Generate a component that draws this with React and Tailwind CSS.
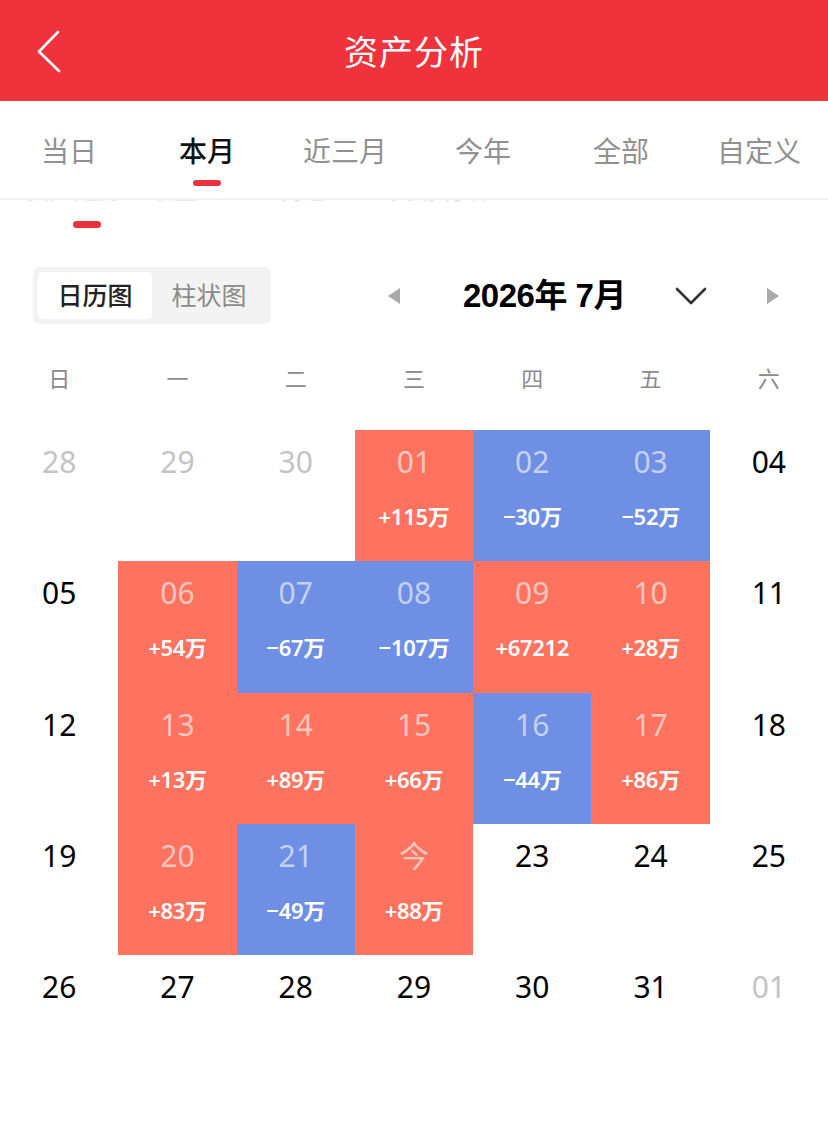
import React, { useState } from 'react';

const RED = 'bg-[#fe735f]';
const BLUE = 'bg-[#6e8fe3]';

const tabs = ['当日', '本月', '近三月', '今年', '全部', '自定义'];
const weekdays = ['日', '一', '二', '三', '四', '五', '六'];

// d: label, m: muted (other month), t: tone (up/down), v: change
const days = [
  { d: '28', m: true }, { d: '29', m: true }, { d: '30', m: true },
  { d: '01', t: 'up', v: '+115万' }, { d: '02', t: 'down', v: '−30万' }, { d: '03', t: 'down', v: '−52万' }, { d: '04' },
  { d: '05' }, { d: '06', t: 'up', v: '+54万' }, { d: '07', t: 'down', v: '−67万' }, { d: '08', t: 'down', v: '−107万' },
  { d: '09', t: 'up', v: '+67212' }, { d: '10', t: 'up', v: '+28万' }, { d: '11' },
  { d: '12' }, { d: '13', t: 'up', v: '+13万' }, { d: '14', t: 'up', v: '+89万' }, { d: '15', t: 'up', v: '+66万' },
  { d: '16', t: 'down', v: '−44万' }, { d: '17', t: 'up', v: '+86万' }, { d: '18' },
  { d: '19' }, { d: '20', t: 'up', v: '+83万' }, { d: '21', t: 'down', v: '−49万' }, { d: '今', t: 'up', v: '+88万' },
  { d: '23' }, { d: '24' }, { d: '25' },
  { d: '26' }, { d: '27' }, { d: '28' }, { d: '29' }, { d: '30' }, { d: '31' }, { d: '01', m: true },
];

const DayCell = ({ day }) => {
  const tone = day.t === 'up' ? RED : day.t === 'down' ? BLUE : '';
  const numColor = day.t ? 'text-white/60' : day.m ? 'text-[#c4c4c4]' : 'text-black';
  return (
    <div className={`h-[131.25px] flex flex-col items-center ${tone}`}>
      <span className={`mt-[13px] text-[30px] leading-[38px] ${numColor}`}>{day.d}</span>
      {day.v && (
        <span className="mt-[21px] text-[22px] leading-[28px] font-semibold text-white tracking-[-0.3px]">{day.v}</span>
      )}
    </div>
  );
};

const App = () => {
  const [tab, setTab] = useState(1);
  const [view, setView] = useState(0);

  return (
    <div className="w-[828px] min-h-[1124px] bg-white font-['Noto_Sans','Noto_Sans_CJK_SC',sans-serif]">
      {/* top bar */}
      <div className="h-[101px] bg-[#ef323b] flex items-center justify-center relative">
        <svg className="absolute left-[34px] top-[27px]" width="30" height="50" viewBox="0 0 30 50" fill="none">
          <path d="M24 5 L5 24.5 L25 44" stroke="white" strokeWidth="2.6" strokeLinecap="round" strokeLinejoin="round" />
        </svg>
        <h1 className="text-white text-[34px] tracking-[1px] font-['Noto_Sans_CJK_SC',sans-serif]">资产分析</h1>
      </div>

      {/* period tabs */}
      <div className="h-[99px] grid grid-cols-6 border-b-2 border-[#f1f1f1]">
        {tabs.map((t, i) => (
          <button key={t} onClick={() => setTab(i)} className="flex flex-col items-center pt-[30px]">
            <span className={`text-[28px] leading-[40px] ${i === tab ? 'text-[#111] font-medium' : 'text-[#919191]'}`}>{t}</span>
            <span className={`mt-[9px] w-[28px] h-[6px] rounded-full ${i === tab ? 'bg-[#e8323c]' : 'bg-transparent'}`} />
          </button>
        ))}
      </div>

      <div className="h-[36px] relative">
        <div className="h-[6px] overflow-hidden text-[24px] leading-[30px] text-[#d0d0d0] opacity-50">
          <div className="-mt-[25px] flex whitespace-nowrap">
            <span className="ml-[26px] w-[124px]">资产走势</span>
            <span className="w-[130px]">收益</span>
            <span className="w-[110px]">持仓</span>
            <span>交易明细</span>
          </div>
        </div>
        <div className="absolute left-[73px] top-[21px] w-[28px] h-[7px] rounded-full bg-[#e8323c]" />
      </div>

      {/* view switch + month selector */}
      <div className="mt-[31px] h-[57px] flex items-center">
        <div className="ml-[33px] w-[238px] h-[57px] bg-[#f3f3f3] rounded-[7px] p-[5px] flex">
          {['日历图', '柱状图'].map((v, i) => (
            <button
              key={v}
              onClick={() => setView(i)}
              className={`w-[114px] h-full rounded-[5px] text-[25px] leading-none ${i === view ? 'bg-white text-[#222] font-medium' : 'text-[#8a8a8a]'}`}
            >
              {v}
            </button>
          ))}
        </div>
        <div className="flex-1 flex items-center">
          <svg className="ml-[116px]" width="14" height="18" viewBox="0 0 14 18">
            <path d="M13 1 L1 9 L13 17 Z" fill="#a9a9a9" />
          </svg>
          <span className="ml-[62px] w-[172px] whitespace-nowrap text-[33px] font-bold text-black font-['Liberation_Sans','Noto_Sans_CJK_SC',sans-serif] tracking-[-0.5px]">
            2026年 7月
          </span>
          <svg className="ml-[40px]" width="32" height="18" viewBox="0 0 32 18" fill="none">
            <path d="M2 2 L16 16 L30 2" stroke="#333" strokeWidth="2.6" strokeLinecap="round" strokeLinejoin="round" />
          </svg>
          <svg className="ml-[59px]" width="14" height="18" viewBox="0 0 14 18">
            <path d="M1 1 L13 9 L1 17 Z" fill="#a9a9a9" />
          </svg>
        </div>
      </div>

      {/* weekday header */}
      <div className="mt-[29px] grid grid-cols-7 h-[50px] items-center">
        {weekdays.map((w) => (
          <span key={w} className="text-center text-[22px] text-[#8b8b8b]">{w}</span>
        ))}
      </div>

      {/* calendar */}
      <div className="mt-[27px] grid grid-cols-7">
        {days.map((day, i) => (
          <DayCell key={i} day={day} />
        ))}
      </div>
    </div>
  );
};

export default App;
